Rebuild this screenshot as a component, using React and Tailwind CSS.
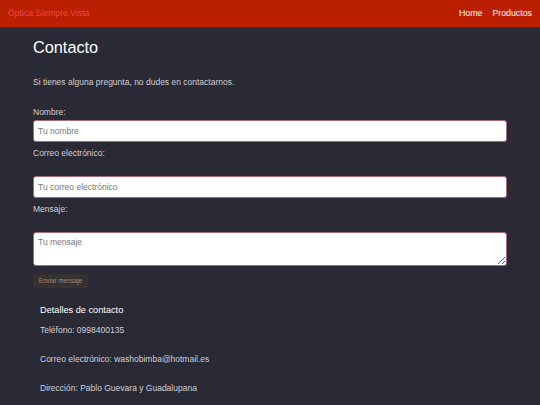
import React from "react";

const App = () => {
  return (
    <div className="min-h-[405px] bg-[#292a36] font-['Liberation_Sans',Arial,sans-serif]">
      {/* header */}
      <header className="h-[28px] bg-[#b91f00] border-b border-[#7a1a10] flex items-center justify-between px-2">
        <span className="text-[8.7px] text-[#f0454a]">Óptica Siempre Vista</span>
        <nav className="flex gap-[10px] text-[8.8px] text-white">
          <a href="#">Home</a>
          <a href="#">Productos</a>
        </nav>
      </header>

      <main className="px-[33px] pt-[9px]">
        <h2 className="text-[16.3px] text-white leading-[20px]">Contacto</h2>
        <p className="mt-[20px] text-[8.5px] text-[#cfcfd4] leading-[10px]">
          Si tienes alguna pregunta, no dudes en contactarnos.
        </p>

        <form className="mt-[20px] flex flex-col">
          <label className="text-[8.5px] text-[#cfcfd4] leading-[10px]">Nombre:</label>
          <input
            type="text"
            placeholder="Tu nombre"
            className="mt-[3px] h-[22px] w-full bg-white border border-[#a86a74] rounded-[3px] px-[4px] text-[8.5px] placeholder:text-[#777777] outline-none"
          />
          <label className="mt-[6px] text-[8.5px] text-[#cfcfd4] leading-[10px]">Correo electrónico:</label>
          <input
            type="email"
            placeholder="Tu correo electrónico"
            className="mt-[18px] h-[22px] w-full bg-white border border-[#a86a74] rounded-[3px] px-[4px] text-[8.5px] placeholder:text-[#777777] outline-none"
          />
          <label className="mt-[6px] text-[8.5px] text-[#cfcfd4] leading-[10px]">Mensaje:</label>
          <textarea
            placeholder="Tu mensaje"
            className="mt-[18px] h-[34px] w-full bg-white border border-[#a86a74] rounded-[3px] px-[4px] py-[4px] text-[8.5px] leading-[10px] placeholder:text-[#777777] outline-none resize-y"
          />
          <div className="mt-[8px] flex">
            <button
              type="button"
              className="h-[14px] w-[55px] bg-[#34332f] rounded-[2px] text-[6.3px] leading-[14px] text-[#a08580]"
            >
              Enviar mensaje
            </button>
          </div>
        </form>

        <section className="mt-[16px] px-[7px]">
          <h4 className="text-[9.2px] text-white leading-[12px]">Detalles de contacto</h4>
          <p className="mt-[9px] text-[8.5px] text-[#cfcfd4] leading-[10px]">Teléfono: 0998400135</p>
          <p className="mt-[19px] text-[8.5px] text-[#cfcfd4] leading-[10px]">
            Correo electrónico: washobimba@hotmail.es
          </p>
          <p className="mt-[19px] text-[8.5px] text-[#cfcfd4] leading-[10px]">
            Dirección: Pablo Guevara y Guadalupana
          </p>
        </section>
      </main>
    </div>
  );
};

export default App;
